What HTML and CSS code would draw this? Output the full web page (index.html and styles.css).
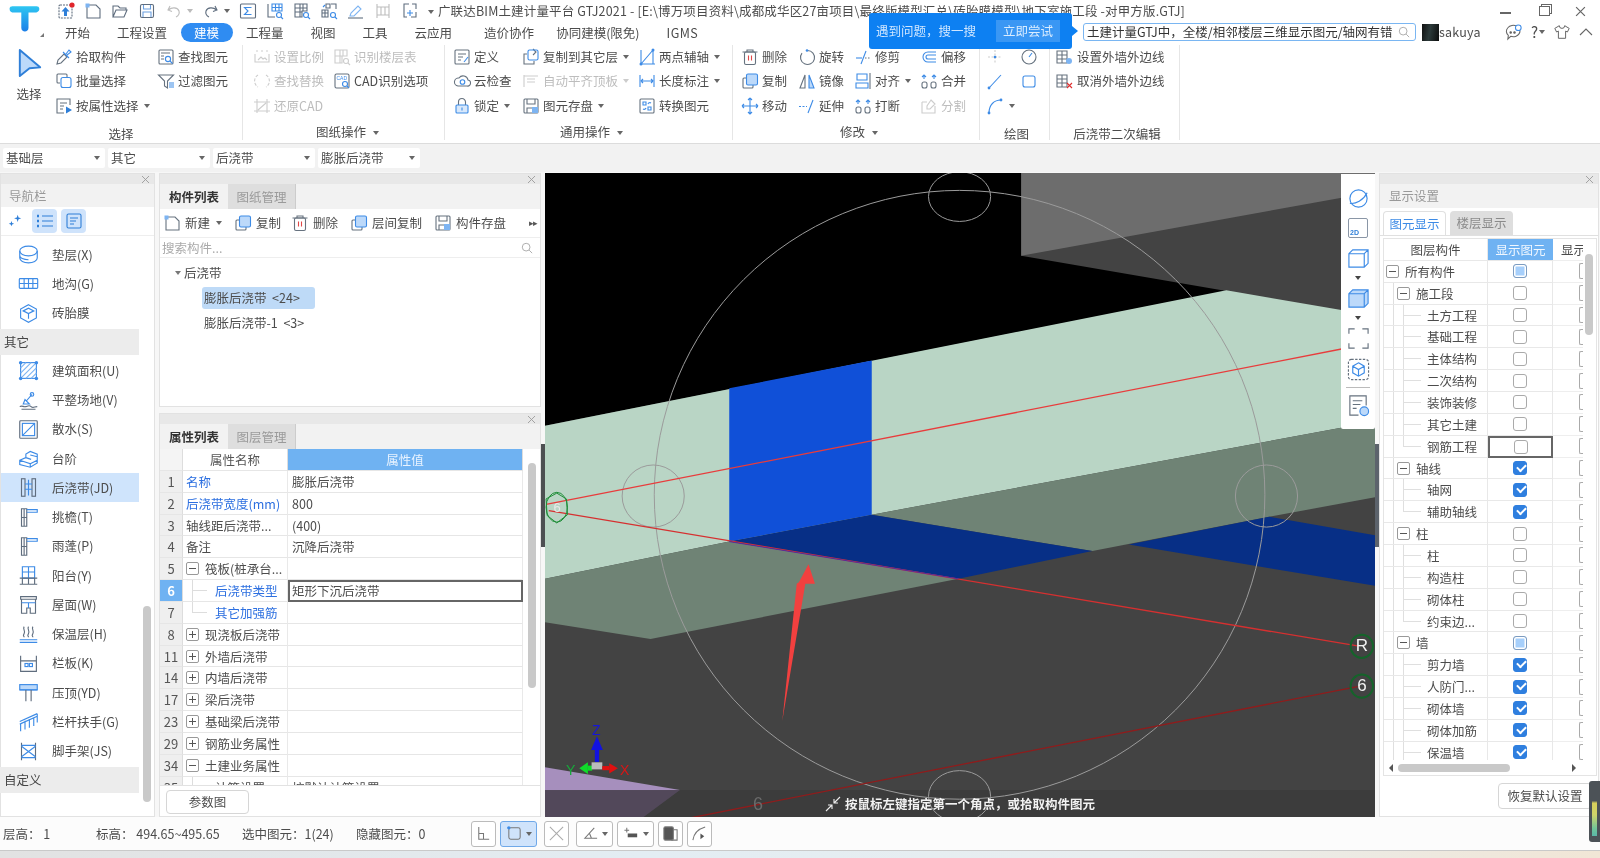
FILE: index.html
```html
<!DOCTYPE html>
<html lang="zh">
<head>
<meta charset="utf-8">
<title>广联达BIM土建计量平台 GTJ2021</title>
<link rel="stylesheet" href="styles.css">
</head>
<body>
<svg class="sprite" xmlns="http://www.w3.org/2000/svg">
  <defs>
    <linearGradient id="logoGrad" x1="0" y1="0" x2="0" y2="1"><stop offset="0" stop-color="#2ec6f2"/><stop offset="1" stop-color="#1b7fe8"/></linearGradient>
    <symbol id="i-up" viewBox="0 0 18 18"><rect x="2" y="3" width="13" height="13" rx="1" stroke-dasharray="2 1"/><path fill="#2f7fd8" stroke="none" d="M8.5 5l4 4.5H10V14H7V9.500H4.500z"/><circle cx="15" cy="3" r="2.600" fill="#e0252b" stroke="none"/></symbol>
    <symbol id="i-new" viewBox="0 0 18 18"><path d="M3 3h9l4 4v9H3z"/><rect x="1.500" y="1.500" width="4" height="4" fill="#7db4f2" stroke="none"/></symbol>
    <symbol id="i-open" viewBox="0 0 18 18"><path d="M2 15V4h5l2 2h6v2M2 15l3-7h11l-3 7z"/></symbol>
    <symbol id="i-save" viewBox="0 0 18 18"><rect x="2.500" y="2.500" width="13" height="13" rx="1.500"/><path d="M5.500 3v4h7V3M5 15v-5h8v5" stroke="#6a9fe0"/></symbol>
    <symbol id="i-undo" viewBox="0 0 18 18"><path d="M5 4L3 8l4 1.500M3.500 8c3-3 9-3 10.500 1 .8 3-1 5-3 6"/></symbol>
    <symbol id="i-redo" viewBox="0 0 18 18"><path d="M13 4l2 4-4 1.500M14.500 8c-3-3-9-3-10.500 1-.8 3 1 5 3 6"/></symbol>
    <symbol id="i-sum" viewBox="0 0 18 18"><rect x="1.500" y="2" width="15" height="14" rx="1"/><path stroke="#3d8be6" d="M12.500 5.500h-7l3.500 3.500-3.500 3.500h7"/></symbol>
    <symbol id="i-floor" viewBox="0 0 18 18"><path d="M2 2v13h7"/><path stroke="#3d8be6" d="M6 2h10v7H6zM6 5.500h10M9.500 2v7M13 2v7"/><circle stroke="#3d8be6" cx="13" cy="13" r="2.500"/><path stroke="#3d8be6" d="M15 15l2 2"/></symbol>
    <symbol id="i-grid" viewBox="0 0 18 18"><path d="M2 2h12v7H9v6H2zM2 6h12M2 10h7M7 2v13M10 2v7"/><circle stroke="#3d8be6" cx="13" cy="13" r="2.500"/><path stroke="#3d8be6" d="M15 15l2 2"/></symbol>
    <symbol id="i-grid2" viewBox="0 0 18 18"><path d="M6 2h4v4H6zM11 2h5v5M2 8h6v7H2zM2 11h6M5 8v7"/><circle stroke="#3d8be6" cx="13" cy="13" r="2.500"/><path stroke="#3d8be6" d="M15 15l2 2M5 3l-2 2"/></symbol>
    <symbol id="i-pen" viewBox="0 0 18 18"><path stroke="#7db4f2" d="M3 14l1-3 7-7 3 3-7 7z"/><path d="M1 16h15"/></symbol>
    <symbol id="i-col" viewBox="0 0 18 18"><path d="M3 2v14M15 2v14M3 5h12M3 13h12M7 5v8M11 5v8"/></symbol>
    <symbol id="i-fit" viewBox="0 0 18 18"><path d="M8 2H3v13h3M11 2h4v5M15 10v5h-5"/><path stroke="#3d8be6" d="M9 8v6M6 11h6"/></symbol>
    <symbol id="i-arrow" viewBox="0 0 32 32"><path fill="#bcd9fa" stroke="#2f7fd8" stroke-width="2" stroke-linejoin="round" d="M6 3l21 18-11 1-10 8z"/></symbol>
    <symbol id="i-pick" viewBox="0 0 18 18"><path d="M2 16l1-4 6-6 3 3-6 6z"/><path stroke="#3d8be6" d="M8 4l6 6M11 6l3-4 2 2-4 3"/></symbol>
    <symbol id="i-batch" viewBox="0 0 18 18"><path d="M5 11H3a1 1 0 0 1-1-1V3a1 1 0 0 1 1-1h8a1 1 0 0 1 1 1v2"/><rect x="6" y="5.500" width="10" height="10" rx="2" stroke="#3d8be6"/></symbol>
    <symbol id="i-attr" viewBox="0 0 18 18"><path d="M15 8V2H2v14h7"/><path d="M5 6h7M5 9h4M5 12h3"/><path fill="#2f7fd8" stroke="none" d="M11 9.500l6 3.500-6 3.500z"/></symbol>
    <symbol id="i-find" viewBox="0 0 18 18"><rect x="2" y="2" width="14" height="14" rx="1"/><path d="M4 5h9M4 8h3M4 11h3"/><circle stroke="#3d8be6" cx="11" cy="11" r="2.600" fill="#fff"/><path stroke="#3d8be6" d="M13 13l2.500 2.500"/></symbol>
    <symbol id="i-funnel" viewBox="0 0 18 18"><path d="M1.500 3h15l-6 6v7l-3-2V9z"/><path stroke="#3d8be6" d="M12 11h5M12 13h5M12 15h5"/></symbol>
    <symbol id="i-scale" viewBox="0 0 18 18"><path d="M3 3h2M8 3h2M13 3h2M2 6v8h14V6"/><path d="M5 12l3-3 2 2 2-1 2 2"/></symbol>
    <symbol id="i-tbl" viewBox="0 0 18 18"><path d="M2 2h12v6H9v7H2zM2 8h7M7 2v13M10 2v6"/><circle cx="13" cy="13" r="2.500"/><path d="M15 15l2 2"/></symbol>
    <symbol id="i-swap" viewBox="0 0 18 18"><path stroke-dasharray="3 1.500" d="M5 3a7 7 0 0 0 0 12M13 3a7 7 0 0 1 0 12"/></symbol>
    <symbol id="i-crop" viewBox="0 0 18 18"><path d="M1 5h16M1 14h16M4 2v14M14 2v14M5 13l8-7"/></symbol>
    <symbol id="i-cadq" viewBox="0 0 18 18"><rect x="2" y="2" width="14" height="14" rx="1.500"/><text x="3.500" y="8" class="svgtx">CAD</text><circle stroke="#3d8be6" cx="12" cy="12" r="2.500" fill="#fff"/><path stroke="#3d8be6" d="M14 14l2 2"/></symbol>
    <symbol id="i-def" viewBox="0 0 18 18"><rect x="2" y="2" width="14" height="14" rx="1"/><path d="M5 6h8M5 9h5M5 12h3"/><path stroke="#3d8be6" d="M11 14l4-5"/></symbol>
    <symbol id="i-cloud" viewBox="0 0 18 18"><path d="M5 14h9a3 3 0 0 0 1-6 5 5 0 0 0-9-2A4 4 0 0 0 5 14z"/><circle stroke="#3d8be6" cx="9.500" cy="10" r="2.300"/></symbol>
    <symbol id="i-lock" viewBox="0 0 18 18"><path d="M5.500 8V5a3.500 3.500 0 0 1 7 0v3"/><rect x="3" y="8" width="12" height="8" rx="1" stroke="#3d8be6" fill="#d8e8fb"/><path stroke="#3d8be6" d="M9 10.500v3"/></symbol>
    <symbol id="i-copyl" viewBox="0 0 18 18"><path d="M5 6H2v10h10v-3"/><path d="M11 1l3 3-3 3"/><rect x="6" y="2" width="10" height="10" rx="1.500" stroke="#3d8be6"/></symbol>
    <symbol id="i-align" viewBox="0 0 18 18"><path d="M2 3v12M2 4h14M5 7h8M5 10h8"/></symbol>
    <symbol id="i-disk" viewBox="0 0 18 18"><rect x="2" y="2" width="14" height="14" rx="1"/><path d="M5 2v5h8V2M5 16v-5h5"/><rect x="10" y="10" width="6" height="6" fill="#7db4f2" stroke="none"/></symbol>
    <symbol id="i-twop" viewBox="0 0 18 18"><path stroke="#3d8be6" d="M3 16L15 2M3 2v14h14M15 2v14"/><circle cx="3" cy="16" r="1.500" fill="#3d8be6" stroke="none"/><circle cx="15" cy="2" r="1.500" fill="#3d8be6" stroke="none"/></symbol>
    <symbol id="i-dim" viewBox="0 0 18 18"><path stroke="#3d8be6" d="M2 3v12M16 3v12M3 9h12M3 9l2-2M3 9l2 2M15 9l-2-2M15 9l-2 2"/></symbol>
    <symbol id="i-conv" viewBox="0 0 18 18"><rect x="2" y="2" width="14" height="14" rx="1"/><path stroke="#3d8be6" d="M5 5h3v3H5zM10 10h3v3h-3zM10 7a2 2 0 0 1 3-1M8 11a2 2 0 0 1-3 1"/></symbol>
    <symbol id="i-del" viewBox="0 0 18 18"><path d="M1.500 4h15M6 4V2h6v2"/><rect x="3.500" y="4" width="11" height="12.500" rx="1.500"/><path stroke="#e04848" d="M7.500 7.500v5M10.500 7.500v5"/></symbol>
    <symbol id="i-rot" viewBox="0 0 18 18"><path d="M9.500 2.500a7 7 0 1 1-5.500 2.700"/><circle cx="9" cy="2.500" r="1.300" fill="#3d8be6" stroke="none"/></symbol>
    <symbol id="i-trim" viewBox="0 0 18 18"><path stroke="#3d8be6" d="M2 10h6"/><path d="M12 3l-5 13" stroke="#3d8be6"/><path stroke-dasharray="1.500 1.500" d="M11 10h6"/></symbol>
    <symbol id="i-off" viewBox="0 0 18 18"><path stroke="#3d8be6" d="M16 4H8a5 5 0 0 0 0 10h8M16 7H8a2 2 0 0 0 0 4h8"/></symbol>
    <symbol id="i-dup" viewBox="0 0 18 18"><path d="M5 6H3a1 1 0 0 0-1 1v8a1 1 0 0 0 1 1h8a1 1 0 0 0 1-1v-2"/><rect x="5.500" y="2" width="11" height="11" rx="1.500" fill="#bcd9fa" stroke="#3d8be6"/></symbol>
    <symbol id="i-mirror" viewBox="0 0 18 18"><path d="M7 3L2 16h5z"/><path fill="#bcd9fa" stroke="#3d8be6" d="M11 3l5 13h-5z"/></symbol>
    <symbol id="i-alignh" viewBox="0 0 18 18"><path stroke="#3d8be6" d="M3 2h10v6H3zM2 11h12v5H2z"/><path d="M16 1v16"/></symbol>
    <symbol id="i-merge" viewBox="0 0 18 18"><rect x="2" y="10" width="5" height="6" rx="2"/><rect x="11" y="10" width="5" height="6" rx="2"/><path stroke="#3d8be6" d="M4 7V3M14 7V3M2 5l2-2 2 2M12 5l2-2 2 2"/></symbol>
    <symbol id="i-move" viewBox="0 0 18 18"><path stroke="#3d8be6" d="M9 1v16M1 9h16M9 1L7 3M9 1l2 2M9 17l-2-2M9 17l2-2M1 9l2-2M1 9l2 2M17 9l-2-2M17 9l-2 2"/></symbol>
    <symbol id="i-ext" viewBox="0 0 18 18"><path stroke="#3d8be6" stroke-dasharray="2 1.500" d="M1 9.500h8"/><path d="M15 3l-5 13" stroke="#3d8be6"/></symbol>
    <symbol id="i-split" viewBox="0 0 18 18"><path d="M2 5v11h13V9M7 5H2M11 3l4 4-5 5H7V9z"/></symbol>
    <symbol id="i-pt" viewBox="0 0 18 18"><path stroke-dasharray="2 1.500" d="M9 2v14M2 9h14"/><circle cx="9" cy="9" r="1.300" fill="#3d8be6" stroke="none"/></symbol>
    <symbol id="i-gauge" viewBox="0 0 18 18"><circle cx="9" cy="9" r="7"/><path stroke="#3d8be6" d="M9 9l3-4"/></symbol>
    <symbol id="i-line" viewBox="0 0 18 18"><path stroke="#3d8be6" d="M3 16L15 3"/><circle cx="3" cy="16" r="1.400" fill="#3d8be6" stroke="none"/></symbol>
    <symbol id="i-rect" viewBox="0 0 18 18"><rect x="3" y="4" width="12" height="11" rx="2" stroke="#3d8be6"/></symbol>
    <symbol id="i-arc" viewBox="0 0 18 18"><path stroke="#3d8be6" d="M3 16C3 8 8 3 15 3"/><circle cx="3" cy="16" r="1.400" fill="#3d8be6" stroke="none"/><circle cx="15" cy="3" r="1.400" fill="#3d8be6" stroke="none"/></symbol>
    <symbol id="i-wall" viewBox="0 0 18 18"><path d="M1 3h10v12H1zM1 7h10M1 11h10M6 3v12"/><circle cx="13" cy="13" r="3" fill="#7db4f2" stroke="none"/></symbol>
    <symbol id="i-wallx" viewBox="0 0 18 18"><path d="M1 3h10v12H1zM1 7h10M1 11h10M6 3v12"/><path stroke="#e03030" d="M11 11l5 5M16 11l-5 5"/></symbol>
    <symbol id="i-spark" viewBox="0 0 18 18"><path fill="#2f7fd8" stroke="none" d="M12 2l1 3 3 1-3 1-1 3-1-3-3-1 3-1zM5 9l.8 2.200L8 12l-2.200.8L5 15l-.8-2.200L2 12l2.200-.8z"/></symbol>
    <symbol id="i-listb" viewBox="0 0 18 18"><path stroke="#2f7fd8" d="M6 4h11M6 9h11M6 14h11"/><path stroke="#2f7fd8" stroke-width="2.500" d="M1 4h2M1 9h2M1 14h2"/></symbol>
    <symbol id="i-card" viewBox="0 0 18 18"><rect x="2" y="2" width="14" height="14" rx="1.500" stroke="#2f7fd8"/><path stroke="#2f7fd8" d="M5 6h8M5 9h6M5 12h4"/></symbol>
    <symbol id="n-pad" viewBox="0 0 24 24"><ellipse cx="12" cy="8" rx="10" ry="5.500" stroke="#3d8be6"/><path stroke="#3d8be6" d="M2 8v8c0 3 4.500 5.500 10 5.500S22 19 22 16V8M2 13c0 3 4.500 5 10 5"/></symbol>
    <symbol id="n-ditch" viewBox="0 0 24 24"><rect x="1.500" y="6.500" width="21" height="11" rx="1" stroke="#3d8be6"/><path stroke="#3d8be6" d="M1.500 12h21M7 6.500v11M12 6.500v11M17 6.500v11"/></symbol>
    <symbol id="n-mold" viewBox="0 0 24 24"><path stroke="#3d8be6" d="M12 2l9 5v10l-9 5-9-5V7zM12 2v0M6 9l6-3 6 3-6 3zM12 12v6"/></symbol>
    <symbol id="n-area" viewBox="0 0 24 24"><rect x="3" y="3" width="18" height="18" stroke="#3d8be6"/><path stroke="#7db4f2" d="M3 9l6-6M3 15L15 3M3 21L21 3M9 21L21 9M15 21l6-6"/><g fill="#3d8be6" stroke="none"><circle cx="3" cy="3" r="2"/><circle cx="21" cy="3" r="2"/><circle cx="3" cy="21" r="2"/><circle cx="21" cy="21" r="2"/></g></symbol>
    <symbol id="n-land" viewBox="0 0 24 24"><path d="M2 19c3-2 4 1 7 0s4-2 6 0 4 0 7 0M4 22h16"/><path stroke="#3d8be6" d="M6 16l2-5 5 5zM10 12l6-7"/><circle cx="16" cy="5" r="2" stroke="#3d8be6"/></symbol>
    <symbol id="n-apron" viewBox="0 0 24 24"><rect x="2" y="2" width="20" height="20" rx="1"/><rect x="5" y="5" width="14" height="14" stroke="#3d8be6"/><path stroke="#3d8be6" d="M5 19L19 5"/></symbol>
    <symbol id="n-step" viewBox="0 0 24 24"><path stroke="#3d8be6" d="M2 14l7-3v-4l5-3 8 3v10l-8 5-12-3zM9 11l6 2M14 8l8 2M2 14l12 4v3M14 18l8-4"/></symbol>
    <symbol id="n-band" viewBox="0 0 24 24"><rect x="4" y="2" width="4" height="20"/><rect x="16" y="2" width="4" height="20"/><path stroke="#3d8be6" d="M8 8h8M8 14h8M12 3v18"/></symbol>
    <symbol id="n-eave" viewBox="0 0 24 24"><path d="M4 2h6v20H4zM4 12h6M7 2v20"/><path stroke="#3d8be6" d="M10 3h12v3H10"/></symbol>
    <symbol id="n-balc" viewBox="0 0 24 24"><path stroke="#3d8be6" d="M5 2h14v13H5zM12 2v13M5 8h14"/><path d="M2 15h20M2 22h20M5 15v7M12 15v7M19 15v7"/></symbol>
    <symbol id="n-roof" viewBox="0 0 24 24"><path d="M3 3h18v3H3zM4 6h16v16h-6v-6h-4v6H4z"/><path stroke="#3d8be6" d="M4 10h16M12 10v6"/></symbol>
    <symbol id="n-heat" viewBox="0 0 24 24"><path d="M7 3c-2 3 2 5 0 8s0 3 0 4M12 3c-2 3 2 5 0 8s0 3 0 4M17 3c-2 3 2 5 0 8s0 3 0 4"/><path stroke="#3d8be6" d="M2 18h20M2 21h20"/></symbol>
    <symbol id="n-rail" viewBox="0 0 24 24"><path d="M3 3v18h18V3M3 9h18"/><rect x="8" y="12" width="3.500" height="3.500" stroke="#3d8be6"/><rect x="13" y="12" width="3.500" height="3.500" stroke="#3d8be6"/></symbol>
    <symbol id="n-cope" viewBox="0 0 24 24"><rect x="2" y="3" width="20" height="6" fill="#bcd9fa" stroke="#3d8be6"/><path stroke="#3d8be6" d="M2 9h20"/><path d="M9 9v13M15 9v13"/></symbol>
    <symbol id="n-hand" viewBox="0 0 24 24"><path stroke="#3d8be6" d="M2 12l20-9M2 15l20-9M3 14v9M8 11v10M13 9v10M18 7v10M22 3v10"/></symbol>
    <symbol id="n-scaf" viewBox="0 0 24 24"><path d="M4 2v20M20 2v20"/><path stroke="#3d8be6" d="M4 5h16M4 19h16M4 6l16 12M20 6L4 18"/></symbol>
    <symbol id="c-orbit" viewBox="0 0 24 24"><circle cx="12" cy="12" r="9" stroke="#3d8be6"/><path stroke="#3d8be6" d="M3 17c6 1 14-3 18-11"/></symbol>
    <symbol id="c-box" viewBox="0 0 24 24"><path d="M2 7l4-4h16v14l-4 4H2zM2 7h16v14M18 7l4-4" stroke="#3d8be6"/></symbol>
    <symbol id="c-boxf" viewBox="0 0 24 24"><path fill="#bcd9fa" stroke="#3d8be6" d="M2 7l4-4h16v14l-4 4H2zM2 7h16v14M18 7l4-4"/></symbol>
    <symbol id="c-fit" viewBox="0 0 24 24"><path d="M2 7V2h6M16 2h6v5M22 17v5h-6M8 22H2v-5"/></symbol>
    <symbol id="c-iso" viewBox="0 0 24 24"><rect x="1.500" y="1.500" width="21" height="21" rx="3" stroke-dasharray="2.500 1.500"/><path stroke="#3d8be6" d="M12 5l6 3.500v7L12 19l-6-3.500v-7zM6 8.500l6 3.500 6-3.500M12 12v7"/></symbol>
    <symbol id="c-view" viewBox="0 0 24 24"><path d="M20 12V2H3v20h9"/><path d="M6 7h10M6 11h8M6 15h4"/><circle cx="18" cy="18" r="4.500" fill="#bcd9fa" stroke="#3d8be6"/></symbol>
    <symbol id="s-ortho" viewBox="0 0 18 18"><path d="M4 2v13h11M4 9h5v6"/></symbol>
    <symbol id="s-rect" viewBox="0 0 18 18"><rect x="3" y="3" width="12" height="12" rx="2"/><circle cx="3" cy="3" r="1.800" fill="#3d8be6" stroke="none"/></symbol>
    <symbol id="s-x" viewBox="0 0 18 18"><path stroke="#aaa" d="M2 2l14 14M16 2L2 16"/></symbol>
    <symbol id="s-ang" viewBox="0 0 18 18"><path d="M13 3L3 14h13M8 9l2 5"/></symbol>
    <symbol id="s-plus" viewBox="0 0 18 18"><path d="M4 3v5M1.500 5.500h5"/><rect x="5" y="9" width="10" height="4" fill="#555" stroke="none"/></symbol>
    <symbol id="s-doc" viewBox="0 0 18 18"><rect x="2" y="2" width="10" height="14" rx="1.500" fill="#555"/><path d="M12 5h4v11h-6"/></symbol>
    <symbol id="s-arc" viewBox="0 0 18 18"><path d="M2 16C3 8 8 4 15 2"/><path fill="#555" stroke="none" d="M10 9l4 3-4 3z"/></symbol>
    <symbol id="a-chat" viewBox="0 0 20 20"><path d="M3 5a7 6 0 1 1 3 9l-3 3 .5-4A7 6 0 0 1 3 5z"/><circle cx="14" cy="5" r="3" fill="#fff" stroke="#3d8be6"/><circle cx="6" cy="10" r=".8" fill="#555"/><circle cx="10" cy="10" r=".8" fill="#555"/></symbol>
    <symbol id="a-shirt" viewBox="0 0 20 20"><path d="M7 3L2 6l2 4 2-1v8h8V9l2 1 2-4-5-3a3 3 0 0 1-6 0z"/></symbol>
  </defs>
</svg>

<div class="app">
  <header class="top">
    <div class="logo">
      <svg class="logo-t" viewBox="0 0 40 32"><path fill="url(#logoGrad)" d="M4 7c0-3 2-3 5-3h23c3 0 5 0 5 3s-3 4-5 4h-7v17c0 3-2 4-4 4s-4-1-4-4V11H9c-3 0-5-1-5-4z"/></svg>
      <i class="logo-mark"></i>
    </div>
    <div class="top-main">
      <div class="qbar">
        <svg class="qi"><use href="#i-up"/></svg>
        <svg class="qi"><use href="#i-new"/></svg>
        <svg class="qi"><use href="#i-open"/></svg>
        <svg class="qi"><use href="#i-save"/></svg>
        <span class="qdrop off"><svg class="qi"><use href="#i-undo"/></svg><i class="car"></i></span>
        <span class="qdrop"><svg class="qi"><use href="#i-redo"/></svg><i class="car"></i></span>
        <svg class="qi"><use href="#i-sum"/></svg>
        <svg class="qi"><use href="#i-floor"/></svg>
        <svg class="qi"><use href="#i-grid"/></svg>
        <svg class="qi"><use href="#i-grid2"/></svg>
        <svg class="qi"><use href="#i-pen"/></svg>
        <svg class="qi off"><use href="#i-col"/></svg>
        <svg class="qi"><use href="#i-fit"/></svg>
        <span class="title"><i class="car"></i> 广联达BIM土建计量平台 GTJ2021 - [E:\博万项目资料\成都成华区27亩项目\最终版模型汇总\砖胎膜模型\地下室施工段 -对甲方版.GTJ]</span>
        <div class="win">
          <i class="w-min"></i><i class="w-max"></i>
          <svg class="w-x" viewBox="0 0 10 10"><path d="M1 1l8 8M9 1L1 9"/></svg>
        </div>
      </div>
      <div class="tabsrow">
        <nav class="tabs">
          <a>开始</a><a>工程设置</a><a class="on">建模</a><a>工程量</a><a>视图</a><a>工具</a><a>云应用</a><a class="t8">造价协作</a><a>协同建模(限免)</a><a class="t10">IGMS</a>
        </nav>
        <div class="tools">
          <div class="search"><span>土建计量GTJ中，全楼/相邻楼层三维显示图元/轴网有错</span><svg class="mag" viewBox="0 0 14 14"><circle cx="6" cy="6" r="4.500"/><path d="M9.500 9.500L13 13"/></svg></div>
          <i class="avatar"></i><span class="user">sakuya</span>
          <svg class="ti chat"><use href="#a-chat"/></svg>
          <span class="help">?<i class="car"></i></span>
          <svg class="ti shirt"><use href="#a-shirt"/></svg>
          <svg class="ti up" viewBox="0 0 14 14"><path d="M1 10l6-6 6 6"/></svg>
        </div>
      </div>
    </div>
    <div class="tip">
      <span>遇到问题，搜一搜</span><b>立即尝试</b>
    </div>
  </header>

  <section class="ribbon">
    <div class="grp g1 low">
      <div class="gbody">
        <div class="big"><svg class="bigi"><use href="#i-arrow"/></svg><span>选择</span></div>
        <div class="rb"><svg class="ic"><use href="#i-pick"/></svg>拾取构件</div>
        <div class="rb"><svg class="ic"><use href="#i-batch"/></svg>批量选择</div>
        <div class="rb"><svg class="ic"><use href="#i-attr"/></svg>按属性选择<i class="car"></i></div>
        <div class="rb"><svg class="ic"><use href="#i-find"/></svg>查找图元</div>
        <div class="rb"><svg class="ic"><use href="#i-funnel"/></svg>过滤图元</div>
        <div></div>
      </div>
      <div class="glabel">选择</div>
    </div>
    <div class="grp g2">
      <div class="gbody">
        <div class="rb dis"><svg class="ic"><use href="#i-scale"/></svg>设置比例</div>
        <div class="rb dis"><svg class="ic"><use href="#i-swap"/></svg>查找替换</div>
        <div class="rb dis"><svg class="ic"><use href="#i-crop"/></svg>还原CAD</div>
        <div class="rb dis"><svg class="ic"><use href="#i-tbl"/></svg>识别楼层表</div>
        <div class="rb"><svg class="ic"><use href="#i-cadq"/></svg>CAD识别选项</div>
        <div></div>
      </div>
      <div class="glabel">图纸操作<i class="car"></i></div>
    </div>
    <div class="grp g3">
      <div class="gbody">
        <div class="rb"><svg class="ic"><use href="#i-def"/></svg>定义</div>
        <div class="rb"><svg class="ic"><use href="#i-cloud"/></svg>云检查</div>
        <div class="rb"><svg class="ic"><use href="#i-lock"/></svg>锁定<i class="car"></i></div>
        <div class="rb"><svg class="ic"><use href="#i-copyl"/></svg>复制到其它层<i class="car"></i></div>
        <div class="rb dis"><svg class="ic"><use href="#i-align"/></svg>自动平齐顶板<i class="car"></i></div>
        <div class="rb"><svg class="ic"><use href="#i-disk"/></svg>图元存盘<i class="car"></i></div>
        <div class="rb"><svg class="ic"><use href="#i-twop"/></svg>两点辅轴<i class="car"></i></div>
        <div class="rb"><svg class="ic"><use href="#i-dim"/></svg>长度标注<i class="car"></i></div>
        <div class="rb"><svg class="ic"><use href="#i-conv"/></svg>转换图元</div>
      </div>
      <div class="glabel">通用操作<i class="car"></i></div>
    </div>
    <div class="grp g4">
      <div class="gbody">
        <div class="rb"><svg class="ic"><use href="#i-del"/></svg>删除</div>
        <div class="rb"><svg class="ic"><use href="#i-dup"/></svg>复制</div>
        <div class="rb"><svg class="ic"><use href="#i-move"/></svg>移动</div>
        <div class="rb"><svg class="ic"><use href="#i-rot"/></svg>旋转</div>
        <div class="rb"><svg class="ic"><use href="#i-mirror"/></svg>镜像</div>
        <div class="rb"><svg class="ic"><use href="#i-ext"/></svg>延伸</div>
        <div class="rb"><svg class="ic"><use href="#i-trim"/></svg>修剪</div>
        <div class="rb"><svg class="ic"><use href="#i-alignh"/></svg>对齐<i class="car"></i></div>
        <div class="rb"><svg class="ic"><use href="#i-merge"/></svg>打断</div>
        <div class="rb"><svg class="ic"><use href="#i-off"/></svg>偏移</div>
        <div class="rb"><svg class="ic"><use href="#i-merge"/></svg>合并</div>
        <div class="rb dis"><svg class="ic"><use href="#i-split"/></svg>分割</div>
      </div>
      <div class="glabel">修改<i class="car"></i></div>
    </div>
    <div class="grp g5 low">
      <div class="gbody">
        <div class="rb dis"><svg class="ic"><use href="#i-pt"/></svg></div>
        <div class="rb"><svg class="ic"><use href="#i-line"/></svg></div>
        <div class="rb"><svg class="ic"><use href="#i-arc"/></svg><i class="car"></i></div>
        <div class="rb"><svg class="ic"><use href="#i-gauge"/></svg></div>
        <div class="rb"><svg class="ic"><use href="#i-rect"/></svg></div>
        <div></div>
      </div>
      <div class="glabel">绘图</div>
    </div>
    <div class="grp g6 low">
      <div class="gbody">
        <div class="rb"><svg class="ic"><use href="#i-wall"/></svg>设置外墙外边线</div>
        <div class="rb"><svg class="ic"><use href="#i-wallx"/></svg>取消外墙外边线</div>
        <div></div>
      </div>
      <div class="glabel">后浇带二次编辑</div>
    </div>
  </section>

  <div class="combos">
    <div class="combo">基础层<i class="car"></i></div>
    <div class="combo">其它<i class="car"></i></div>
    <div class="combo">后浇带<i class="car"></i></div>
    <div class="combo">膨胀后浇带<i class="car"></i></div>
  </div>

  <main class="main">
    <aside class="panel nav">
      <div class="phead"><svg class="x" viewBox="0 0 8 8"><path d="M0 0l8 8M8 0L0 8"/></svg></div>
      <div class="ptitle">导航栏</div>
      <div class="navtools">
        <svg class="ic nt1"><use href="#i-spark"/></svg>
        <span class="ntb nt2"><svg class="ic"><use href="#i-listb"/></svg></span>
        <span class="ntb"><svg class="ic"><use href="#i-card"/></svg></span>
      </div>
      <div class="navbody">
        <ul class="navlist">
          <li><svg class="ni"><use href="#n-pad"/></svg>垫层(X)</li>
          <li><svg class="ni"><use href="#n-ditch"/></svg>地沟(G)</li>
          <li><svg class="ni"><use href="#n-mold"/></svg>砖胎膜</li>
          <li class="sec">其它</li>
          <li><svg class="ni"><use href="#n-area"/></svg>建筑面积(U)</li>
          <li><svg class="ni"><use href="#n-land"/></svg>平整场地(V)</li>
          <li><svg class="ni"><use href="#n-apron"/></svg>散水(S)</li>
          <li><svg class="ni"><use href="#n-step"/></svg>台阶</li>
          <li class="cur"><svg class="ni"><use href="#n-band"/></svg>后浇带(JD)</li>
          <li><svg class="ni"><use href="#n-eave"/></svg>挑檐(T)</li>
          <li><svg class="ni"><use href="#n-eave"/></svg>雨蓬(P)</li>
          <li><svg class="ni"><use href="#n-balc"/></svg>阳台(Y)</li>
          <li><svg class="ni"><use href="#n-roof"/></svg>屋面(W)</li>
          <li><svg class="ni"><use href="#n-heat"/></svg>保温层(H)</li>
          <li><svg class="ni"><use href="#n-rail"/></svg>栏板(K)</li>
          <li><svg class="ni"><use href="#n-cope"/></svg>压顶(YD)</li>
          <li><svg class="ni"><use href="#n-hand"/></svg>栏杆扶手(G)</li>
          <li><svg class="ni"><use href="#n-scaf"/></svg>脚手架(JS)</li>
          <li class="sec">自定义</li>
        </ul>
        <div class="navthumb"></div>
      </div>
    </aside>

    <div class="midcol">
      <section class="panel list">
        <div class="phead"><svg class="x" viewBox="0 0 8 8"><path d="M0 0l8 8M8 0L0 8"/></svg></div>
        <div class="ptabs"><span class="pt on">构件列表</span><span class="pt">图纸管理</span></div>
        <div class="ltools">
          <span class="lt"><svg class="ic"><use href="#i-new"/></svg>新建<i class="car"></i></span>
          <span class="lt"><svg class="ic"><use href="#i-dup"/></svg>复制</span>
          <span class="lt"><svg class="ic"><use href="#i-del"/></svg>删除</span>
          <span class="lt"><svg class="ic"><use href="#i-dup"/></svg>层间复制</span>
          <span class="lt"><svg class="ic"><use href="#i-disk"/></svg>构件存盘</span>
          <span class="more">&#9656;&#9656;</span>
        </div>
        <div class="lsearch"><span>搜索构件...</span><svg class="mag" viewBox="0 0 14 14"><circle cx="6" cy="6" r="4.500"/><path d="M9.500 9.500L13 13"/></svg></div>
        <div class="ltree">
          <div class="lroot"><i class="car"></i>后浇带</div>
          <div class="lleaf sel">膨胀后浇带&nbsp;&nbsp;&lt;24&gt;</div>
          <div class="lleaf">膨胀后浇带-1&nbsp;&nbsp;&lt;3&gt;</div>
        </div>
      </section>

      <section class="panel props">
        <div class="phead"><svg class="x" viewBox="0 0 8 8"><path d="M0 0l8 8M8 0L0 8"/></svg></div>
        <div class="ptabs"><span class="pt on">属性列表</span><span class="pt">图层管理</span></div>
        <div class="ptable-wrap">
          <div class="ptable">
            <div class="prow head"><b></b><b>属性名称</b><b class="hv">属性值</b></div>
            <div class="prow"><b>1</b><span class="blue">名称</span><em>膨胀后浇带</em></div>
            <div class="prow"><b>2</b><span class="blue">后浇带宽度(mm)</span><em>800</em></div>
            <div class="prow"><b>3</b><span>轴线距后浇带...</span><em>(400)</em></div>
            <div class="prow"><b>4</b><span>备注</span><em>沉降后浇带</em></div>
            <div class="prow"><b>5</b><span class="pg"><i class="tb"></i>筏板(桩承台...</span><em></em></div>
            <div class="prow cur"><b>6</b><span class="blue pc">后浇带类型</span><em>矩形下沉后浇带</em></div>
            <div class="prow"><b>7</b><span class="blue pc pc-end">其它加强筋</span><em></em></div>
            <div class="prow"><b>8</b><span class="pg"><i class="tb plus"></i>现浇板后浇带</span><em></em></div>
            <div class="prow"><b>11</b><span class="pg"><i class="tb plus"></i>外墙后浇带</span><em></em></div>
            <div class="prow"><b>14</b><span class="pg"><i class="tb plus"></i>内墙后浇带</span><em></em></div>
            <div class="prow"><b>17</b><span class="pg"><i class="tb plus"></i>梁后浇带</span><em></em></div>
            <div class="prow"><b>23</b><span class="pg"><i class="tb plus"></i>基础梁后浇带</span><em></em></div>
            <div class="prow"><b>29</b><span class="pg"><i class="tb plus"></i>钢筋业务属性</span><em></em></div>
            <div class="prow"><b>34</b><span class="pg"><i class="tb"></i>土建业务属性</span><em></em></div>
            <div class="prow"><b>35</b><span class="pc">计算设置</span><em>按默认计算设置</em></div>
          </div>
          <div class="pscroll"><i></i></div>
        </div>
        <div class="pfoot"><button class="btn">参数图</button></div>
      </section>
    </div>

    <div class="split"><i></i></div>

    <section class="canvas">
      <svg class="scene" viewBox="28 5 1549.600 1555" preserveAspectRatio="none">
        <rect x="28" y="5" width="1550" height="1555" fill="#434343"/>
        <polygon fill="#000" points="28,5 917,5 917,205 1300,290 28,615"/>
        <polygon fill="#6d6d6d" points="917,5 1578,5 1578,50 917,205"/>
        <polygon fill="#b9d5c5" points="28,615 1300,288 1578,350 1578,605 638,830 372,895 28,985"/>
        <polygon fill="#1050d8" points="372,525 638,458 638,830 372,895"/>
        <polygon fill="#6f8375" points="28,985 372,895 800,985 225,1130 28,1090"/>
        <polygon fill="#6f8375" points="638,830 1578,605 1578,788 1380,835 1050,918"/>
        <polygon fill="#072f86" points="372,895 638,830 1050,918 800,985"/>
        <polygon fill="#072f86" points="1118,902 1380,835 1578,880 1578,1002"/>
        <polygon fill="#a68fbd" points="28,1440 280,1495 28,1495"/>
        <polygon fill="#5c5165" points="28,1495 280,1495 210,1562 28,1562"/>
        <rect x="28" y="1495" width="1550" height="67" fill="#000" opacity=".1"/>
        <g class="thin">
          <ellipse cx="802" cy="782" rx="570" ry="735"/>
          <ellipse cx="802" cy="62" rx="58" ry="60"/>
          <ellipse cx="230" cy="785" rx="58" ry="75"/>
          <ellipse cx="1375" cy="785" rx="58" ry="75"/>
          <ellipse cx="802" cy="1510" rx="58" ry="62"/>
        </g>
        <g class="axisl">
          <path class="r1" d="M30 805L1515 430"/>
          <path class="r2" d="M35 820L1545 1147"/>
          <path class="r3" d="M300 1562L1545 1245"/>
        </g>
        <path class="pur" d="M372 895L800 985"/>
        <g class="gc">
          <ellipse cx="50" cy="812" rx="20" ry="36"/>
          <polygon points="50,778 68,792 70,830 50,850 32,832 30,792"/>
          <ellipse class="dk" cx="1553" cy="1148" rx="21" ry="28"/>
          <ellipse class="dk" cx="1553" cy="1244" rx="21" ry="28"/>
        </g>
        <polygon fill="#f2403f" points="520,950 532,997 514,997 471,1328 498,997 498,997 502,993"/>
        <rect x="121" y="1395" width="8" height="32" fill="#1212e0"/>
        <polygon fill="#1212e0" points="125,1365 136,1398 114,1398"/>
        <polygon fill="#0fdc2a" points="92,1442 108,1428 108,1456"/>
        <rect x="108" y="1436" width="8" height="12" fill="#0fdc2a"/>
        <rect x="115" y="1428" width="20" height="17" fill="#bbb"/>
        <polygon fill="#e01010" points="164,1442 148,1430 148,1455"/>
        <rect x="135" y="1437" width="13" height="10" fill="#e01010"/>
      </svg>
      <span class="lbl lz">Z</span><span class="lbl ly">Y</span><span class="lbl lx">X</span>
      <span class="gl gl-r">R</span><span class="gl gl-6">6</span><span class="gl gl-l">6</span><span class="gl gl-b">6</span>
      <div class="hint"><svg viewBox="0 0 16 16"><path d="M15 1L9 7M9 3v4h4M1 15l6-6M7 13V9H3"/></svg>按鼠标左键指定第一个角点，或拾取构件图元</div>
      <div class="vtools">
        <svg class="vi"><use href="#c-orbit"/></svg>
        <span class="two">2D</span>
        <svg class="vi"><use href="#c-box"/></svg><i class="car"></i>
        <svg class="vi"><use href="#c-boxf"/></svg><i class="car"></i>
        <svg class="vi"><use href="#c-fit"/></svg>
        <svg class="vi mt8"><use href="#c-iso"/></svg>
        <hr>
        <svg class="vi"><use href="#c-view"/></svg>
      </div>
    </section>

    <div class="split right"><i></i></div>

    <aside class="panel disp">
      <div class="phead"><svg class="x" viewBox="0 0 8 8"><path d="M0 0l8 8M8 0L0 8"/></svg></div>
      <div class="ptitle">显示设置</div>
      <div class="dtabs"><span class="dt on">图元显示</span><span class="dt">楼层显示</span></div>
      <div class="dframe">
        <div class="dview">
          <div class="dcols">
            <div class="drow head"><span>图层构件</span><b>显示图元</b><s>显示</s></div>
            <div class="drow"><span class="l0"><i class="tb"></i>所有构件</span><u><i class="ck part"></i></u><s></s></div>
            <div class="drow"><span class="l1"><i class="tb"></i>施工段</span><u><i class="ck"></i></u><s></s></div>
            <div class="drow"><span class="l2">土方工程</span><u><i class="ck"></i></u><s></s></div>
            <div class="drow"><span class="l2">基础工程</span><u><i class="ck"></i></u><s></s></div>
            <div class="drow"><span class="l2">主体结构</span><u><i class="ck"></i></u><s></s></div>
            <div class="drow"><span class="l2">二次结构</span><u><i class="ck"></i></u><s></s></div>
            <div class="drow"><span class="l2">装饰装修</span><u><i class="ck"></i></u><s></s></div>
            <div class="drow"><span class="l2">其它土建</span><u><i class="ck"></i></u><s></s></div>
            <div class="drow"><span class="l2 end">钢筋工程</span><u class="focus"><i class="ck"></i></u><s></s></div>
            <div class="drow"><span class="l1"><i class="tb"></i>轴线</span><u><i class="ck on"></i></u><s></s></div>
            <div class="drow"><span class="l2">轴网</span><u><i class="ck on"></i></u><s></s></div>
            <div class="drow"><span class="l2 end">辅助轴线</span><u><i class="ck on"></i></u><s></s></div>
            <div class="drow"><span class="l1"><i class="tb"></i>柱</span><u><i class="ck"></i></u><s></s></div>
            <div class="drow"><span class="l2">柱</span><u><i class="ck"></i></u><s></s></div>
            <div class="drow"><span class="l2">构造柱</span><u><i class="ck"></i></u><s></s></div>
            <div class="drow"><span class="l2">砌体柱</span><u><i class="ck"></i></u><s></s></div>
            <div class="drow"><span class="l2 end">约束边...</span><u><i class="ck"></i></u><s></s></div>
            <div class="drow"><span class="l1"><i class="tb"></i>墙</span><u><i class="ck part"></i></u><s></s></div>
            <div class="drow"><span class="l2">剪力墙</span><u><i class="ck on"></i></u><s></s></div>
            <div class="drow"><span class="l2">人防门...</span><u><i class="ck on"></i></u><s></s></div>
            <div class="drow"><span class="l2">砌体墙</span><u><i class="ck on"></i></u><s></s></div>
            <div class="drow"><span class="l2">砌体加筋</span><u><i class="ck on"></i></u><s></s></div>
            <div class="drow"><span class="l2">保温墙</span><u><i class="ck on"></i></u><s></s></div>
          </div>
          <div class="dvs"><i></i></div>
        </div>
        <div class="dhs"><i class="al"></i><b></b><i class="ar"></i></div>
      </div>
      <div class="dfoot"><button class="btn">恢复默认设置</button></div>
    </aside>
  </main>

  <footer class="status">
    <span class="s1">层高：&nbsp;1</span>
    <span class="s2">标高：&nbsp;494.65~495.65</span>
    <span class="s3">选中图元：1(24)</span>
    <span class="s4">隐藏图元：0</span>
    <div class="sbtns">
      <span class="sb"><svg class="ic"><use href="#s-ortho"/></svg></span>
      <span class="sb wide act"><svg class="ic"><use href="#s-rect"/></svg><i class="car"></i></span>
      <span class="sb gap"><svg class="ic"><use href="#s-x"/></svg></span>
      <span class="sb wide gap"><svg class="ic"><use href="#s-ang"/></svg><i class="car"></i></span>
      <span class="sb wide"><svg class="ic"><use href="#s-plus"/></svg><i class="car"></i></span>
      <span class="sb"><svg class="ic"><use href="#s-doc"/></svg></span>
      <span class="sb"><svg class="ic"><use href="#s-arc"/></svg></span>
    </div>
  </footer>
  <div class="desk"></div>
  <div class="meter"><i></i></div>
</div>
</body>
</html>
```
FILE: styles.css
```css
* { box-sizing: border-box; }
html, body { margin: 0; padding: 0; }
body { width: 1600px; height: 858px; overflow: hidden; background: #f2f2f2; }
.sprite { position: absolute; width: 0; height: 0; }
.app {
  position: relative; width: 1600px; height: 858px; display: flex; flex-direction: column;
  font: 12.5px/18px "Noto Sans CJK SC", "Liberation Sans", sans-serif; color: #4c4c4c;
  background: #f2f2f2; filter: blur(.5px);
}
svg { display: block; flex: none; }
i, em, s, u { font-style: normal; text-decoration: none; }
.car { display: inline-block; width: 0; height: 0; margin-left: 6px; border: 3px solid transparent; border-top: 4px solid #666; border-bottom: 0; vertical-align: 2px; flex: none; }
.svgtx { font: 5px "Liberation Sans", sans-serif; fill: #3d8be6; stroke: none; }

/* top */
.top { position: relative; display: flex; height: 42px; background: #fff; flex: none; }
.logo { position: relative; width: 51px; flex: none; }
.logo-t { width: 36px; height: 30px; margin: 2px 0 0 6px; }
.logo-mark { position: absolute; left: 40px; top: 33px; border: 2px solid transparent; border-right-color: #777; border-bottom-color: #777; }
.top-main { flex: 1; min-width: 0; display: flex; flex-direction: column; }
.qbar { display: flex; align-items: center; gap: 9px; height: 22px; padding-left: 6px; overflow: hidden; }
.qi { width: 18px; height: 18px; fill: none; stroke: #5f6d7e; stroke-width: 1.1; }
.qi.off, .off .qi { stroke: #bdbdbd; }
.qdrop { display: flex; align-items: center; width: 28px; flex: none; }
.qdrop .car { margin-left: 4px; }
.qdrop.off .car { border-top-color: #bbb; }
.title { white-space: nowrap; margin-left: 0; letter-spacing: .16px; flex: none; width: 762px; overflow: hidden; }
.title .car { margin: 0 1px 0 0; }
.win { margin-left: auto; display: flex; align-items: center; gap: 25px; padding-right: 14.5px; }
.w-min { width: 11px; height: 2px; background: #666; margin: 4px 3px 0 0; }
.w-max { width: 11px; height: 10px; border: 1px solid #666; box-shadow: 2px -2px 0 -1px #fff, 2px -2px 0 0 #666; }
.w-x { width: 11px; height: 11px; stroke: #666; fill: none; stroke-width: 1.100; }
.tabsrow { display: flex; align-items: center; height: 20px; }
.tabs { display: flex; align-items: center; padding-left: .5px; }
.tabs a { padding: 0 13.5px; height: 19px; line-height: 19px; white-space: nowrap; }
.tabs a.on { background: #2f8cf2; color: #fff; border-radius: 10px; }
.tabs a.t8 { padding: 0 8.5px 0 18.5px; }
.tabs a.t10 { letter-spacing: .4px; }
.tools { margin-left: auto; display: flex; align-items: center; padding-right: 7px; }
.search { display: flex; align-items: center; justify-content: space-between; width: 333px; height: 18px; padding: 0 5px 0 3px; border: 1px solid #7ab6f2; border-radius: 3px; background: #fff; color: #333; white-space: nowrap; overflow: hidden; }
.mag { width: 12px; height: 12px; fill: none; stroke: #aaa; stroke-width: 1.100; }
.avatar { width: 17px; height: 17px; margin-left: 6px; background: linear-gradient(100deg, #111, #2c3a3a 45%, #0c0c0c); flex: none; }
.user { width: 42px; letter-spacing: .2px; }
.ti { fill: none; stroke: #666; stroke-width: 1.100; }
.chat { width: 19px; height: 19px; margin-left: 23.5px; }
.help { margin-left: 5.5px; width: 22px; padding-left: 2px; font-size: 15px; display: flex; align-items: center; }
.help .car { margin-left: 1px; }
.shirt { width: 18px; height: 18px; margin-left: 2px; }
.up { width: 14px; height: 14px; margin-left: 8px; }
.tip { position: absolute; left: 869px; top: 13px; z-index: 5; width: 203px; height: 36px; display: flex; align-items: center; padding-left: 7px; background: #0d80f2; color: #cfe6ff; border-radius: 3px; }
.tip::after { content: ""; position: absolute; left: 203px; top: 13px; border: 5px solid transparent; border-left: 6px solid #0d80f2; border-right: 0; }
.tip b { margin-left: 20px; padding: 2px 7px; background: #3a97f4; color: #d9ecff; font-weight: 400; }

/* ribbon */
.ribbon { display: flex; height: 102px; padding: 3px 0; background: #fff; border-bottom: 1px solid #dcdcdc; flex: none; }
.grp { display: flex; flex-direction: column; border-right: 1px solid #e6e6e6; flex: none; }
.gbody { display: grid; grid-auto-flow: column; grid-template-rows: repeat(3, 24.3px); height: 73px; }
.glabel { margin-top: 5px; text-align: center; white-space: nowrap; }
.low .glabel { margin-top: 7px; }
.glabel .car { margin-left: 7px; }
.rb { display: flex; align-items: center; gap: 3px; padding-left: 2px; white-space: nowrap; }
.rb .car { margin-left: 2px; }
.rb.dis { color: #bdbdbd; }
.rb.dis .ic { stroke: #cdcdcd; }
.rb.dis .car { border-top-color: #ccc; }
.ic { width: 18px; height: 18px; fill: none; stroke: #66727f; stroke-width: 1.100; }
.big { grid-row: span 3; display: flex; flex-direction: column; align-items: center; width: 40px; margin-left: 9px; }
.bigi { width: 31px; height: 31px; margin-top: 2px; fill: none; }
.big span { margin-top: 7px; }
.g1 { width: 243px; } .g1 .gbody { grid-template-columns: 53px 102px 1fr; }
.g2 { width: 202px; padding-left: 8px; } .g2 .gbody { grid-template-columns: 80px 1fr; }
.g3 { width: 288px; padding-left: 6px; } .g3 .gbody { grid-template-columns: 69px 116px 1fr; }
.g4 { width: 247px; padding-left: 6px; } .g4 .gbody { grid-template-columns: 57px 56px 66px 1fr; }
.g5 { width: 70px; padding-left: 4px; } .g5 .gbody { grid-template-columns: 34px 1fr; }
.g6 { width: 130px; padding-left: 5px; }
.g6 .rb { padding-left: 1px; }

/* combos */
.combos { display: flex; gap: 3px; height: 28px; padding: 4px 0 0 3px; background: #f2f2f2; flex: none; }
.combo { display: flex; align-items: center; justify-content: space-between; width: 102px; height: 20px; padding: 0 5px 0 3px; background: #fff; border-radius: 2px; }

/* main */
.main { display: flex; height: 645px; padding-top: 1px; background: #f7f7f7; flex: none; }
.panel { background: #fff; border: 1px solid #e2e2e2; display: flex; flex-direction: column; }
.phead { display: flex; justify-content: flex-end; align-items: center; height: 10px; padding-right: 5px; background: #e8e8e8; flex: none; }
.x { width: 7px; height: 7px; stroke: #999; fill: none; stroke-width: 1; }
.ptitle { height: 23px; line-height: 23px; padding-left: 8px; background: #f2f2f2; color: #999; flex: none; }
.split { width: 4px; flex: none; display: flex; align-items: flex-start; }
.split i { display: block; width: 4px; height: 103px; margin-top: 271px; background: #4d4f52; }
.split.right i { background: #5c636c; }

/* nav */
.nav { width: 155px; margin-right: 4px; }
.navtools { display: flex; align-items: center; height: 29px; border-bottom: 1px solid #eee; padding-left: 6px; flex: none; }
.nt1 { width: 16px; height: 16px; }
.ntb { display: flex; align-items: center; justify-content: center; width: 25px; height: 24px; border-radius: 4px; background: #cfe3fb; margin-left: 4px; }
.ntb.nt2 { margin-left: 9px; }
.navbody { display: flex; flex: 1; min-height: 0; }
.navlist { list-style: none; margin: 0; padding: 4px 0 0; width: 138px; flex: none; }
.navlist li { display: flex; align-items: center; height: 29.25px; padding-left: 17px; gap: 13px; white-space: nowrap; }
.navlist li.sec { height: 26px; margin: 1.400px 0 1px -1px; padding-left: 4px; background: #ececec; color: #444; }
.navlist li.cur { background: #cfe4fc; }
.ni { width: 21px; height: 21px; fill: none; stroke: #5f6d7e; stroke-width: 1.300; }
.navthumb { width: 8px; height: 196px; margin: 370px 0 0 4px; background: #c9c9c9; border-radius: 4px; flex: none; }

/* mid */
.midcol { width: 382px; display: flex; flex-direction: column; gap: 6px; flex: none; }
.list { height: 234px; flex: none; }
.props { flex: 1; min-height: 0; }
.ptabs { display: flex; height: 25px; background: #f2f2f2; flex: none; }
.pt { width: 68px; text-align: center; line-height: 25px; background: #dedede; color: #9a9a9a; border-right: 1px solid #ccc; }
.pt.on { background: #f2f2f2; color: #333; font-weight: 700; border-right: 0; }
.ltools { display: flex; align-items: center; height: 29px; padding-left: 3px; border-bottom: 1px solid #eee; flex: none; }
.lt { display: flex; align-items: center; gap: 4px; margin-right: 12px; white-space: nowrap; }
.lt .car { margin-left: 2px; }
.lt:nth-child(2) { margin-right: 10px; }
.more { margin-left: auto; width: 8px; margin-right: 3px; font-size: 9px; letter-spacing: -1px; color: #555; }
.lsearch { display: flex; align-items: center; justify-content: space-between; height: 20px; padding: 0 7px 0 2px; color: #aaa; border-bottom: 1px solid #eee; flex: none; }
.ltree { padding: 3px 0 0; }
.lroot { display: flex; align-items: center; height: 24px; padding-left: 15px; }
.lroot .car { margin: 0 3px 0 0; border-top-color: #777; }
.lleaf { height: 22px; line-height: 22px; margin: 3px 0 0 42px; padding-left: 2px; width: 113px; border-radius: 3px; white-space: nowrap; }
.lleaf.sel { background: #bedaf7; margin-top: 2px; }

.ptable-wrap { display: flex; height: 336px; overflow: hidden; flex: none; }
.ptable { width: 363px; flex: none; border-right: 1px solid #eee; }
.prow { display: grid; grid-template-columns: 23px 105px 235px; height: 21.85px; line-height: 21px; }
.prow > * { border-bottom: 1px solid #e6e6e6; border-right: 1px solid #e9e9e9; white-space: nowrap; overflow: hidden; font-weight: 400; }
.prow > b { background: #efefef; text-align: center; color: #555; font-size: 13px; border-right: 1px solid #ddd; }
.prow > span { padding-left: 3px; }
.prow > em { padding-left: 4px; }
.prow .blue { color: #2c6fe0; }
.prow.head > b { background: #fff; text-align: center; font-size: 12.5px; }
.prow.head > b:first-child { background: #f4f4f4; }
.prow.head > .hv { background: #6fb2f2; color: #e8f3ff; }
.prow.cur > b { background: #6fb2f2; color: #fff; font-weight: 700; }
.prow.cur > em { border: 2px solid #666; background: #fff; padding-left: 2px; line-height: 18px; }
.prow .pg { display: flex; align-items: center; gap: 6px; padding-left: 3px; }
.prow .pc { padding-left: 32px; background: linear-gradient(#ddd, #ddd) 9px 0 / 1px 100% no-repeat, linear-gradient(#ddd, #ddd) 9px 50% / 15px 1px no-repeat; }
.prow .pc-end { background: linear-gradient(#ddd, #ddd) 9px 0 / 1px 50% no-repeat, linear-gradient(#ddd, #ddd) 9px 50% / 15px 1px no-repeat; }
.tb { display: block; width: 13px; height: 13px; flex: none; border: 1px solid #999; border-radius: 2px; background: linear-gradient(#555, #555) center / 7px 1px no-repeat #fff; }
.tb.plus { background: linear-gradient(#555, #555) center / 7px 1px no-repeat, linear-gradient(#555, #555) center / 1px 7px no-repeat, #fff; }
.pscroll { flex: 1; padding: 14px 0 0 5px; }
.pscroll i { display: block; width: 8px; height: 225px; background: #c9c9c9; border-radius: 4px; }
.pfoot { padding: 4px 0 0 6px; border-top: 1px solid #e2e2e2; }
.btn { display: block; font: inherit; color: #4c4c4c; background: #fff; border: 1px solid #d6d6d6; border-radius: 4px; height: 24px; padding: 0; cursor: default; }
.pfoot .btn { width: 83px; }

/* canvas */
.canvas { position: relative; width: 830px; height: 644px; background: #434343; overflow: hidden; flex: none; }
.scene { width: 830px; height: 644px; }
.scene * { vector-effect: non-scaling-stroke; }
.thin { fill: none; stroke: #9b9b9b; stroke-width: 1; }
.axisl path { fill: none; stroke-width: 1.300; }
.r1 { stroke: #e83c3c; }
.r2 { stroke: #d63030; }
.r3 { stroke: #8f1c1c; stroke-width: 1.800; }
.pur { stroke: #5a2c9a; stroke-width: 1; fill: none; }
.gc { fill: none; stroke: #1f8e38; stroke-width: 1; }
.gc .dk { stroke: #15632a; stroke-width: 2; }
.lbl { position: absolute; font: 14px/16px "Liberation Sans", sans-serif; }
.lz { left: 47px; top: 549px; color: #1616d8; }
.ly { left: 21px; top: 589px; color: #17a83a; }
.lx { left: 75px; top: 589px; color: #d81616; }
.gl { position: absolute; width: 20px; text-align: center; font: 17px/20px "Liberation Sans", sans-serif; color: #f2f2f2; }
.gl-r { left: 807px; top: 463px; }
.gl-6 { left: 807px; top: 503px; }
.gl-l { left: 2px; top: 325px; font-size: 13px; color: #e8e8e8; }
.gl-b { left: 203px; top: 621px; color: #6a6a6a; font-size: 18px; }
.hint { position: absolute; left: 280px; top: 622px; display: flex; align-items: center; gap: 4px; color: #f2f2f2; font-weight: 700; white-space: nowrap; }
.hint svg { width: 16px; height: 16px; fill: none; stroke: #eee; stroke-width: 1.100; }
.vtools { position: absolute; right: 0; top: 1px; width: 34px; height: 255px; background: #fff; border-radius: 0 0 2px 2px; display: flex; flex-direction: column; align-items: center; padding-top: 12.5px; }
.vi { width: 23px; height: 23px; fill: none; stroke: #66727f; stroke-width: 1.200; }
.vi.mt8 { margin-top: 8px; }
.two { display: flex; align-items: flex-end; width: 20px; height: 20px; margin: 8.5px 0; padding: 0 0 0 1px; border: 1px solid #8a96a6; border-radius: 2px; color: #2f7fd8; font: 700 7px/9px "Liberation Sans", sans-serif; }
.vtools .car { margin: 6.5px 0; border-top-color: #444; }
.vtools hr { width: 24px; margin: 6.5px 0 6px; border: 0; border-top: 1px solid #bbb; }

/* display panel */
.disp { width: 220px; flex: none; position: relative; }
.disp .ptitle { height: 24px; line-height: 24px; padding-left: 9px; }
.dtabs { display: flex; height: 28px; padding: 3px 0 0 3px; gap: 4px; background: #fff; flex: none; border-bottom: 1px solid #e0e0e0; }
.dt { width: 63px; text-align: center; line-height: 24px; background: #dedede; color: #8a8a8a; border-radius: 4px 4px 0 0; }
.dt.on { background: #fff; color: #3d8be6; border: 1px solid #e0e0e0; border-bottom: 0; }
.dframe { margin: 2px 0 0 3px; width: 214px; height: 538px; border: 1px solid #e4e4e4; flex: none; }
.dview { display: flex; height: 521px; overflow: hidden; }
.dcols { width: 199px; flex: none; }
.drow { display: grid; grid-template-columns: 104px 65px 30px; height: 21.86px; line-height: 21px; }
.drow > * { border-bottom: 1px solid #e8e8e8; border-right: 1px solid #e8e8e8; white-space: nowrap; overflow: hidden; display: flex; align-items: center; font-weight: 400; }
.drow > s { border-right: 0; border-bottom: 1px solid #eee; padding-left: 26px; }
.drow > s::before { content: ""; display: block; width: 3px; height: 14px; border-left: 1px solid #aaa; border-top: 1px solid #aaa; border-bottom: 1px solid #aaa; border-radius: 2px 0 0 2px; flex: none; }
.drow.head > span { justify-content: center; }
.drow.head > b { background: #6fb2f2; color: #f0f7ff; justify-content: center; border-right: 0; }
.drow.head > s { padding-left: 8px; }
.drow.head > s::before { display: none; }
.drow > u { justify-content: center; }
.drow > u.focus { border: 2px solid #666; }
.l0 { padding-left: 2px; gap: 6px; }
.l1 { padding-left: 13px; gap: 6px; background: linear-gradient(#dfdfdf, #dfdfdf) 9px 0 / 1px 100% no-repeat; }
.l2 { padding-left: 43px; background: linear-gradient(#dfdfdf, #dfdfdf) 19px 0 / 1px 100% no-repeat, linear-gradient(#dfdfdf, #dfdfdf) 19px 50% / 18px 1px no-repeat, linear-gradient(#dfdfdf, #dfdfdf) 9px 0 / 1px 100% no-repeat; }
.l2.end { background: linear-gradient(#dfdfdf, #dfdfdf) 19px 0 / 1px 50% no-repeat, linear-gradient(#dfdfdf, #dfdfdf) 19px 50% / 18px 1px no-repeat, linear-gradient(#dfdfdf, #dfdfdf) 9px 0 / 1px 100% no-repeat; }
.ck { position: relative; display: block; width: 14px; height: 14px; border: 1px solid #aaa; border-radius: 3px; background: #fff; flex: none; }
.ck.part { background: #a6cffb; box-shadow: inset 0 0 0 1.500px #fff; border-color: #7d9cc0; }
.ck.on { background: #2f7fdf; border-color: #2f7fdf; }
.ck.on::after { content: ""; position: absolute; left: 2.500px; top: 1.500px; width: 7px; height: 4px; border-left: 2px solid #fff; border-bottom: 2px solid #fff; transform: rotate(-45deg); }
.dvs { flex: 1; padding: 15px 0 0 2px; }
.dvs i { display: block; width: 8px; height: 81px; background: #c9c9c9; border-radius: 4px; }
.dhs { display: flex; align-items: center; height: 15px; padding: 0 5px; }
.dhs b { width: 112px; height: 8px; margin-left: 5px; background: #c9c9c9; border-radius: 4px; }
.dhs .al { border: 4px solid transparent; border-right: 4px solid #555; border-left: 0; }
.dhs .ar { margin-left: 62px; border: 4px solid transparent; border-left: 4px solid #555; border-right: 0; }
.dfoot { display: flex; justify-content: flex-end; padding: 7px 6px 0 0; }
.dfoot .btn { width: 94px; height: 26px; }

/* status */
.status { display: flex; align-items: center; height: 33px; background: #fcfcfc; flex: none; }
.s1 { width: 96px; padding-left: 3px; }
.s2 { width: 146px; }
.s3 { width: 114px; }
.s4 { width: 115px; }
.sbtns { display: flex; gap: 4px; }
.sb { display: flex; align-items: center; justify-content: center; width: 25px; height: 26px; background: #fff; border: 1px solid #bbb; border-radius: 3px; }
.sb .car { margin-left: 3px; }
.sb.wide { width: 37px; }
.sb.gap { margin-left: 3px; }
.sb.act { background: #cfe3fb; border-color: #6fa8e8; }
.sb .ic { stroke: #777; width: 17px; height: 17px; }
.desk { height: 8px; border-top: 1px solid #c9c9c9; background: linear-gradient(90deg, #e2e2e2, #e3edf3 40%, #e8eef0 70%, #f1e6d6); flex: none; }
.meter { position: absolute; left: 1589px; top: 781px; width: 11px; height: 61px; background: #4c5257; border-radius: 3px 0 0 3px; padding: 8px 3px 6px; }
.meter i { display: block; height: 100%; background: linear-gradient(#4c5257 25%, #d8cf5a 30%, #cfd36a 55%, #6fc59a 85%, #5ab6a8); }
```
